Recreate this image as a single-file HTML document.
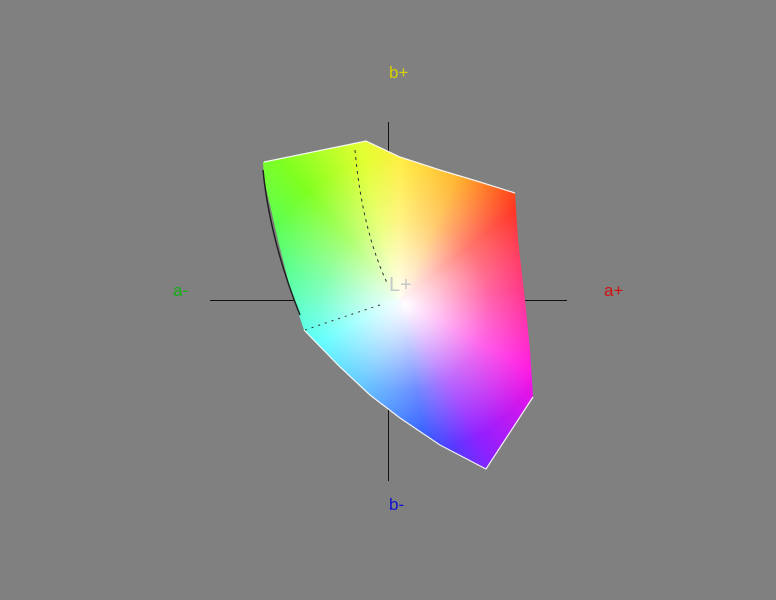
<!DOCTYPE html>
<html><head><style>
html,body{margin:0;padding:0;}
body{width:776px;height:600px;background:#808080;position:relative;overflow:hidden;font-family:"Liberation Sans",sans-serif;}
.ax{position:absolute;background:#111;}
.lbl{position:absolute;font-size:17px;line-height:17px;}
#g{position:absolute;left:0;top:0;width:776px;height:600px;
clip-path:polygon(263px 162px,366px 141px,400px 157px,440px 170px,480px 182px,515px 193px,518px 240px,525px 300px,530px 350px,533px 397px,486px 469px,440px 445px,400px 418px,370px 395px,340px 367px,318px 345px,304px 330px,298px 312px,288px 280px,278px 240px,270px 205px,264px 180px);
background:radial-gradient(circle at 405px 305px,rgba(255,255,255,1) 0px,rgba(255,255,255,.75) 35px,rgba(255,255,255,.35) 85px,rgba(255,255,255,0) 150px),
conic-gradient(from 0deg at 400px 300px,#ffee40 0deg,#ffb020 25deg,#ff3020 52deg,#ff1070 85deg,#ff10e0 118deg,#9020ff 150deg,#2050ff 170deg,#20b0ff 205deg,#20ffff 243deg,#40ff80 285deg,#80ff20 320deg,#e0ff30 345deg,#ffee40 360deg);}
</style></head><body>
<div class="ax" style="left:210px;top:300px;width:357px;height:1px"></div>
<div class="ax" style="left:388px;top:122px;width:1px;height:359px"></div>
<div id="g"></div>
<svg style="position:absolute;left:0;top:0" width="776" height="600">
<polyline points="264,162 366,141 400,157 440,170 480,182 515,193" fill="none" stroke="#fff" stroke-width="1.2" opacity=".9"/>
<polyline points="304,330 340,367 370,395 400,418 440,445 486,469 533,397" fill="none" stroke="#fff" stroke-width="1.2" opacity=".9"/>
<path d="M263,170 Q270,240 300,315" fill="none" stroke="#222" stroke-width="1.5"/>
<path d="M355,150 Q362,230 388,285" fill="none" stroke="#333" stroke-width="1" stroke-dasharray="3 4"/>
<path d="M305,330 Q340,318 380,305" fill="none" stroke="#333" stroke-width="1" stroke-dasharray="2 5"/>
</svg>
<div class="lbl" style="left:389px;top:64px;color:#d8d000">b+</div>
<div class="lbl" style="left:173px;top:282px;color:#10b010">a-</div>
<div class="lbl" style="left:604px;top:282px;color:#d01010">a+</div>
<div class="lbl" style="left:389px;top:496px;color:#1010d0">b-</div>
<div class="lbl" style="left:389px;top:277px;color:#c8c8c8;font-size:20px">L+</div>
</body></html>
